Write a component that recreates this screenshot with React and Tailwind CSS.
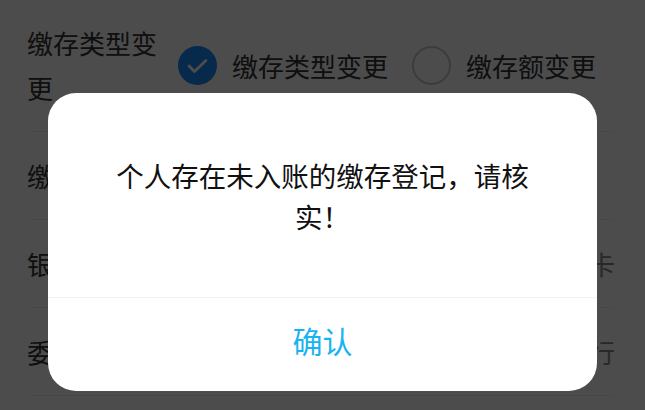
import React, { useState } from "react";

const font = { fontFamily: '"Noto Sans CJK SC", "Noto Sans", sans-serif' };

const rows = [
  { label: "缴存金额", value: "" },
  { label: "银行账户", value: "请选择银行卡" },
  { label: "委托银行", value: "中国建设银行" },
];

const Radio = ({ checked, label, onClick }) => (
  <button type="button" onClick={onClick} className="flex items-center">
    {checked ? (
      <span className="flex h-[39px] w-[39px] items-center justify-center rounded-full bg-[#1989fa]">
        <svg width="27" height="27" viewBox="0 0 24 24" fill="none">
          <path d="M4.5 12.5l4.8 4.8L19.5 7.5" stroke="white" strokeWidth="2.6" strokeLinecap="round" strokeLinejoin="round" />
        </svg>
      </span>
    ) : (
      <span className="h-[39px] w-[39px] rounded-full border-2 border-[#c8c9cc]" />
    )}
    <span className="ml-[15px] text-[26px] leading-[45px] text-[#323233]">{label}</span>
  </button>
);

const App = () => {
  const [type, setType] = useState("type");
  const [open, setOpen] = useState(true);

  return (
    <div className="relative h-[410px] w-[645px] overflow-hidden bg-white" style={font}>
      {/* form under the dialog */}
      <div className="flex items-center pl-[27px] pt-[20px] pb-[21px]">
        <div className="w-[140px] text-[26px] leading-[45px] text-[#323233]">缴存类型变更</div>
        <div className="ml-[11px] flex items-center gap-[24px]">
          <Radio checked={type === "type"} label="缴存类型变更" onClick={() => setType("type")} />
          <Radio checked={type === "amount"} label="缴存额变更" onClick={() => setType("amount")} />
        </div>
      </div>
      {rows.map((row) => (
        <div key={row.label}>
          <div className="mx-[32px] h-px bg-[#ebedf0]" />
          <div className="flex h-[87px] items-center justify-between pl-[27px] pr-[30px] text-[26px]">
            <span className="text-[#323233]">{row.label}</span>
            <span className="text-[#888]">{row.value}</span>
          </div>
        </div>
      ))}
      <div className="mx-[32px] h-px bg-[#ebedf0]" />

      {open && (
        <>
          <div className="absolute inset-0 bg-black/70" />
          <div className="absolute left-[48px] top-[93px] w-[549px] overflow-hidden rounded-[28px] bg-white">
            <div className="px-[60px] pt-[62px] pb-[60px] text-center text-[27.5px] leading-[41px] text-[#111]">
              个人存在未入账的缴存登记，请核实！
            </div>
            <div className="h-px bg-[#f2f3f5]" />
            <button
              type="button"
              onClick={() => setOpen(false)}
              className="flex h-[93px] w-full items-center justify-center pb-[8px] text-[30px] text-[#1ab3f2]"
            >
              确认
            </button>
          </div>
        </>
      )}
    </div>
  );
};

export default App;
